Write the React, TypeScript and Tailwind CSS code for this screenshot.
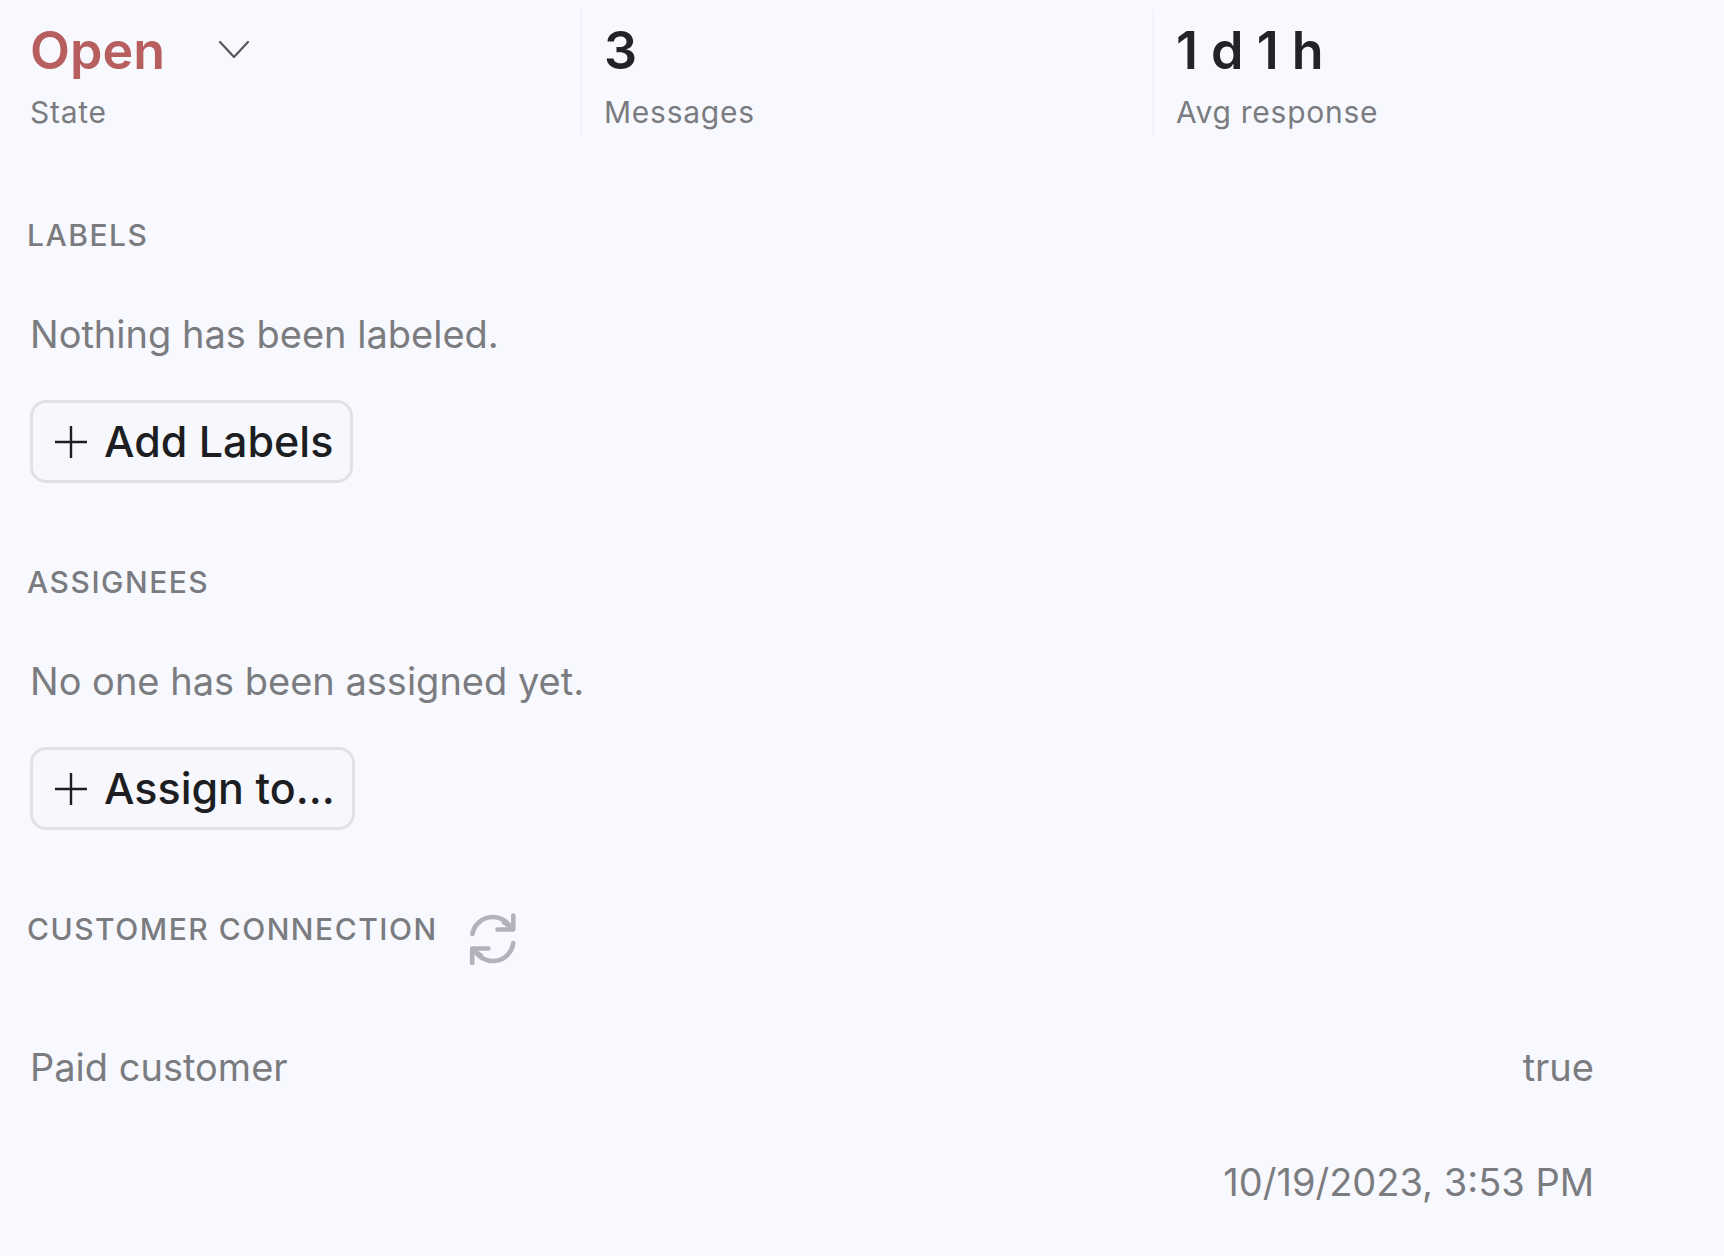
import React, { useState } from "react";

type StatProps = {
  label: string;
  children: React.ReactNode;
};

const Stat: React.FC<StatProps> = ({ label, children }) => (
  <div className="border-l-2 border-[#f0f1fb] pl-[22px]">
    <div className="text-[52px] leading-[82px] font-semibold text-[#222328]">{children}</div>
    <div className="pb-1 text-[30px] leading-10 tracking-wide text-[#7b7c80]">{label}</div>
  </div>
);

const SectionTitle: React.FC<{ children: React.ReactNode }> = ({ children }) => (
  <h2 className="text-[30px] leading-9 font-medium tracking-wider uppercase text-[#7b7c80]">
    {children}
  </h2>
);

const PlusIcon = () => (
  <svg className="h-8 w-8" viewBox="0 0 32 32" fill="none" stroke="currentColor" strokeWidth="2.4" aria-hidden="true">
    <path d="M16 0v32M0 16h32" />
  </svg>
);

const ChevronIcon = () => (
  <svg
    className="pointer-events-none absolute right-0 top-[30px] h-5 w-8"
    viewBox="0 0 32 20"
    fill="none"
    stroke="#55565a"
    strokeWidth="2.2"
    strokeLinecap="round"
    strokeLinejoin="round"
    aria-hidden="true"
  >
    <path d="M2 2l14 15L30 2" />
  </svg>
);

const RefreshIcon = () => (
  <svg
    className="h-[54px] w-12"
    viewBox="0 0 48 54"
    fill="none"
    stroke="currentColor"
    strokeWidth="4.6"
    strokeLinecap="round"
    strokeLinejoin="round"
    aria-hidden="true"
  >
    <path d="M4.4 23A20.7 20.7 0 0 1 43.5 18" />
    <path d="M45.3 4.5v14H29.5" />
    <path d="M36 11.5l7 5" />
    <path d="M45.3 32A20.7 20.7 0 0 1 6 38" />
    <path d="M20.3 37.5H4.2V52" />
    <path d="M13 44.5l-7-5" />
  </svg>
);

type SectionProps = {
  title: string;
  empty: string;
  action: string;
};

const Section: React.FC<SectionProps> = ({ title, empty, action }) => (
  <section className="flex flex-col items-start">
    <div className="pl-[27px]">
      <SectionTitle>{title}</SectionTitle>
    </div>
    <div className="pl-[30px]">
      <p className="mt-[57px] text-[38px] leading-[48px] text-[#7b7c80]">{empty}</p>
      <button
        type="button"
        className="mt-[42px] inline-flex h-[83px] items-center gap-[17px] rounded-2xl border-3 border-[#e0e1e5] bg-[#f7f8fd] pl-[22px] pr-[17px] text-[43px] font-medium text-[#1d1e22]"
      >
        <PlusIcon />
        {action}
      </button>
    </div>
  </section>
);

const details = [
  { name: "Paid customer", value: "true" },
  { name: "", value: "10/19/2023, 3:53 PM" },
];

export default function App() {
  const [state, setState] = useState("Open");

  return (
    <main className="min-h-screen bg-[#f8f9ff] pt-[10px] font-['Inter',sans-serif]">
      <div className="grid grid-cols-3 pl-2">
        <div className="pl-[22px]">
          <div className="relative w-[220px]">
            <select
              id="state"
              value={state}
              onChange={(e) => setState(e.target.value)}
              className="block h-[82px] w-full appearance-none bg-transparent text-[52px] leading-[82px] font-semibold text-[#b75f5e]"
            >
              <option>Open</option>
              <option>Closed</option>
            </select>
            <ChevronIcon />
          </div>
          <label htmlFor="state" className="block text-[30px] leading-10 tracking-wide text-[#7b7c80]">
            State
          </label>
        </div>
        <Stat label="Messages">3</Stat>
        <Stat label="Avg response">1 d 1 h</Stat>
      </div>

      <div className="mt-[81px] flex flex-col gap-[81px]">
        <Section title="Labels" empty="Nothing has been labeled." action="Add Labels" />
        <Section title="Assignees" empty="No one has been assigned yet." action="Assign to..." />

        <section>
          <div className="flex items-start gap-[30px] pl-[27px]">
            <SectionTitle>Customer connection</SectionTitle>
            <button type="button" aria-label="Refresh" className="text-[#b1b2ba]">
              <RefreshIcon />
            </button>
          </div>
          <table className="mt-[45px] w-full text-[38px] text-[#7b7c80]">
            <tbody>
              {details.map((row) => (
                <tr key={row.value} className="h-[115px]">
                  <th scope="row" className="pl-[30px] text-left font-normal">
                    {row.name}
                  </th>
                  <td className="pr-[130px] text-right">{row.value}</td>
                </tr>
              ))}
            </tbody>
          </table>
        </section>
      </div>
    </main>
  );
}
